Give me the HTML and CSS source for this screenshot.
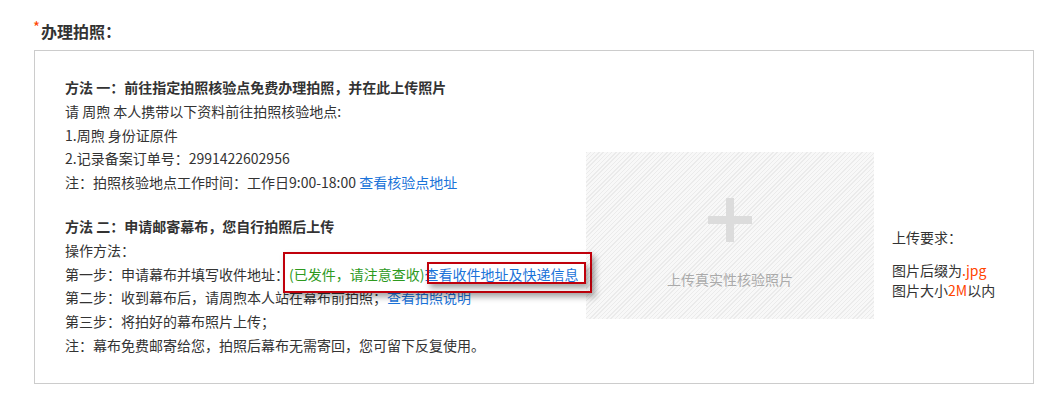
FILE: index.html
```html
<!DOCTYPE html>
<html lang="zh-CN">

<head>
    <meta charset="UTF-8">
    <meta name="viewport" content="width=device-width, initial-scale=1.0">
    <title>办理拍照</title>
    <link rel="stylesheet" href="styles.css">
</head>

<body>
    <div class="page">
        <h2 class="title"><span class="required">*</span>办理拍照：</h2>

        <div class="panel">
            <div class="methods">
                <div class="method">
                    <p class="method-title">方法 一：前往指定拍照核验点免费办理拍照，并在此上传照片</p>
                    <p>请 周煦 本人携带以下资料前往拍照核验地点:</p>
                    <p>1.周煦 身份证原件</p>
                    <p>2.记录备案订单号：2991422602956</p>
                    <p>注：拍照核验地点工作时间：工作日9:00-18:00 <a class="link" href="#">查看核验点地址</a></p>
                </div>

                <div class="method">
                    <p class="method-title">方法 二：申请邮寄幕布，您自行拍照后上传</p>
                    <p>操作方法：</p>
                    <p>第一步：申请幕布并填写收件地址：<span class="sent">(已发件，请注意查收)</span><a class="link" href="#">查看收件地址及快递信息</a></p>
                    <p>第二步：收到幕布后，请周煦本人站在幕布前拍照；<a class="link" href="#">查看拍照说明</a></p>
                    <p>第三步：将拍好的幕布照片上传；</p>
                    <p>注：幕布免费邮寄给您，拍照后幕布无需寄回，您可留下反复使用。</p>
                </div>

                <!-- annotation boxes drawn over the step text -->
                <div class="mark mark-outer"></div>
                <div class="mark mark-inner"></div>
            </div>

            <div class="photo">
                <div class="photo-plus"></div>
                <div class="photo-label">上传真实性核验照片</div>
            </div>

            <div class="require">
                <p class="require-title">上传要求：</p>
                <p>图片后缀为<em class="hl">.jpg</em></p>
                <p>图片大小<em class="hl">2M</em>以内</p>
            </div>
        </div>
    </div>
</body>

</html>
```

FILE: styles.css
```css
body {
    margin: 0;
    font-family: "Microsoft YaHei", "Noto Sans CJK SC", sans-serif;
    font-size: 14px;
    color: #333;
    background-color: #fff;
}

p {
    margin: 0;
}

.page {
    padding-left: 33px;
    width: 1001px;
}

.title {
    margin: 19px 0 7px;
    font-size: 16px;
    line-height: 24px;
    font-weight: bold;
    color: #333;
}

.required {
    display: inline-block;
    color: #f40;
    font-size: 15px;
    line-height: 16px;
    font-weight: normal;
    vertical-align: top;
    margin-right: 1px;
}

.panel {
    display: flex;
    align-items: flex-start;
    margin-left: 1px;
    border: 1px solid #ccc;
    padding: 25px 0 25px 30px;
}

.methods {
    position: relative;
    width: 521px;
    flex-shrink: 0;
    line-height: 23.8px;
}

.method + .method {
    margin-top: 20px;
}

.method-title {
    font-weight: bold;
}

.link {
    color: #1a73d9;
    text-decoration: none;
}

.sent {
    color: #2e9a1e;
}

.mark {
    position: absolute;
    border: 2px solid #c0000b;
    box-shadow: 3px 4px 6px rgba(0, 0, 0, 0.35);
}

.mark-outer {
    left: 218px;
    top: 176px;
    width: 305px;
    height: 37px;
}

.mark-inner {
    left: 362px;
    top: 186px;
    width: 155px;
    height: 18px;
}

.photo {
    width: 288px;
    height: 167px;
    margin-top: 76px;
    flex-shrink: 0;
    display: flex;
    flex-direction: column;
    align-items: center;
    padding-top: 46px;
    box-sizing: border-box;
    background: repeating-linear-gradient(135deg, #ebebeb 0 1px, #f8f8f8 1px 3px);
}

.photo-plus {
    width: 44px;
    height: 44px;
    background:
        linear-gradient(#dcdcdc, #dcdcdc) center / 44px 8px no-repeat,
        linear-gradient(#dcdcdc, #dcdcdc) center / 8px 44px no-repeat;
}

.photo-label {
    margin-top: 27px;
    line-height: 20px;
    color: #aaa;
}

.require {
    margin: 151px 0 0 18px;
    line-height: 20px;
}

.require-title {
    margin-bottom: 13px;
}

.hl {
    font-style: normal;
    color: #f40;
}
```
